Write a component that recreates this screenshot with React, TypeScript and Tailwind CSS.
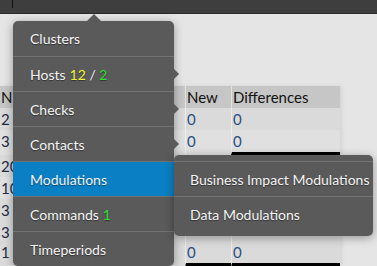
const rows = [
  { n: '2', h: 'h-[22px]', c: 'bg-[#dadada]', bar: '', show: true },
  { n: '3', h: 'h-[25px]', c: 'bg-[#e0e0e0]', bar: 'diff', show: true },
  { n: '20', h: 'h-[22px]', c: 'bg-[#dadada]', bar: '', show: false },
  { n: '10', h: 'h-[22px]', c: 'bg-[#e0e0e0]', bar: '', show: false },
  { n: '3', h: 'h-[22px]', c: 'bg-[#dadada]', bar: '', show: false },
  { n: '3', h: 'h-[20px]', c: 'bg-[#dadada]', bar: '', show: false },
  { n: '1', h: 'h-[25px]', c: 'bg-[#dadada]', bar: 'both', show: true },
];

const menu = ['Clusters', 'Hosts', 'Checks', 'Contacts', 'Modulations', 'Commands', 'Timeperiods'];

const Caret = ({ top }: { top: string }) => (
  <span
    className={`absolute right-[-5px] ${top} h-0 w-0 border-y-[5px] border-l-[5px] border-y-transparent border-l-[#5a5a5a]`}
  />
);

export default function App() {
  return (
    <div className="relative h-[266px] w-[377px] overflow-hidden bg-[#e5e5e5] font-['Lato',sans-serif]">
      {/* top bar */}
      <div className="relative h-[14px] border-b border-[#2c2c2c] bg-[#3e3e3e]">
        <span className="absolute left-[12px] top-0 h-[8px] w-px bg-[#111]" />
      </div>

      {/* table behind the menu */}
      <div className="mt-[72px] w-[340px] text-[15px] leading-[22px] text-[#111] shadow-[2px_0_4px_rgba(0,0,0,0.08)]">
        <div className="grid h-[22px] grid-cols-[185px_46px_109px] bg-[#c6c6c6]">
          <div className="pl-px">N</div>
          <div className="border-l border-[#e2e2e2] pl-[1px]">New</div>
          <div className="border-l border-[#e2e2e2] pl-[1px]">Differences</div>
        </div>
        {rows.map((r, i) => (
          <div key={i} className={`grid ${r.h} grid-cols-[185px_46px_109px] ${r.c}`}>
            <div className="pl-px text-[#1f2a44]">{r.n}</div>
            <div
              className={`border-l border-[#ececec] pl-[1px] text-[#2b4f80] ${
                r.bar === 'both' ? 'border-b-4 border-b-black' : ''
              }`}
            >
              {r.show ? '0' : ''}
            </div>
            <div
              className={`border-l border-[#ececec] pl-[1px] text-[#2b4f80] ${
                r.bar === 'both' ? 'border-b-4 border-b-black' : r.bar === 'diff' ? 'border-b-[3px] border-b-black' : ''
              }`}
            >
              {r.show ? '0' : ''}
            </div>
          </div>
        ))}
      </div>

      {/* main dropdown */}
      <div className="absolute left-[13px] top-[21px] w-[161px] rounded-[5px] bg-[#5a5a5a] text-[14px] text-[#f4f4f4] shadow-[0_2px_10px_rgba(0,0,0,0.35)] [text-shadow:0_1px_1px_rgba(0,0,0,0.45)]">
        <span className="absolute left-[74px] top-[-7px] h-0 w-0 border-x-[7px] border-b-[7px] border-x-transparent border-b-[#5a5a5a]" />
        <Caret top="top-[48px]" />
        <Caret top="top-[83px]" />
        <Caret top="top-[118px]" />
        {menu.map((m, i) => (
          <div
            key={m}
            className={`flex h-[35px] items-center pl-[17px] ${i > 0 ? 'border-t border-[#727272]' : ''} ${
              m === 'Modulations' ? 'bg-[#0b7fc3]' : ''
            }`}
          >
            {m}
            {m === 'Hosts' && (
              <span className="ml-[4px]">
                <span className="text-[#f2f23a]">12</span> / <span className="text-[#2fe22f]">2</span>
              </span>
            )}
            {m === 'Commands' && <span className="ml-[4px] text-[#2fe22f]">1</span>}
          </div>
        ))}
      </div>

      {/* submenu */}
      <div className="absolute left-[174px] top-[155px] w-[199px] rounded-[5px] bg-[#5a5a5a] pb-[5px] pt-[6px] text-[14px] text-[#f4f4f4] shadow-[0_2px_10px_rgba(0,0,0,0.35)] [text-shadow:0_1px_1px_rgba(0,0,0,0.45)]">
        <div className="flex h-[35px] items-center border-t border-[#727272] pl-[16px]">Business Impact Modulations</div>
        <div className="flex h-[35px] items-center border-t border-[#727272] pl-[16px]">Data Modulations</div>
      </div>
    </div>
  );
}
